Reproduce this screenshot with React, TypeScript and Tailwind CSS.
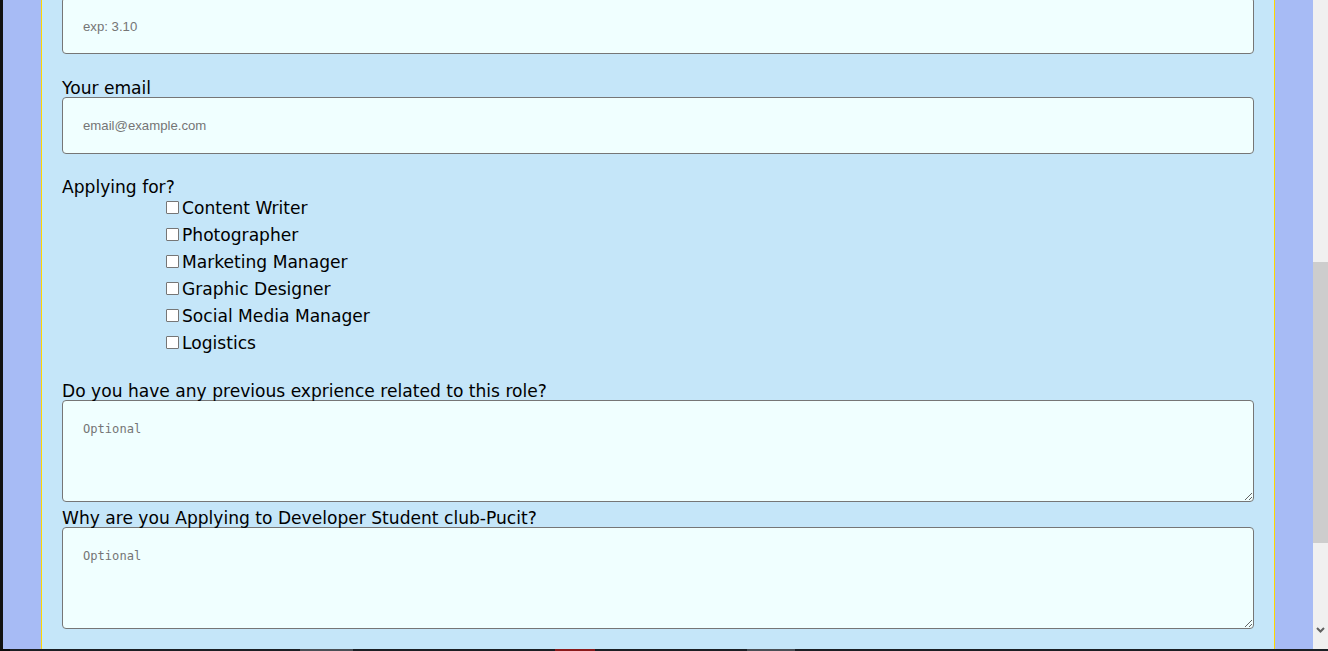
import React from "react";

const roles = [
  "Content Writer",
  "Photographer",
  "Marketing Manager",
  "Graphic Designer",
  "Social Media Manager",
  "Logistics",
];

export default function App() {
  return (
    <div className="w-[1328px] h-[651px] overflow-hidden flex flex-col bg-[#1b1f24]">
      <div className="flex flex-row h-[649px] overflow-hidden">
        <div className="w-[3px] shrink-0 bg-[#111111]" />
        <div className="w-[38px] shrink-0 bg-[#a7bbf5]" />
        <div className="w-[1px] shrink-0 bg-[#ffd700]" />
        <div
          className="flex-1 bg-[#c5e6f9] px-[20px] text-black overflow-hidden"
          style={{ fontFamily: "Verdana, 'DejaVu Sans', sans-serif" }}
        >
          <input
            type="text"
            placeholder="exp: 3.10"
            className="block w-full h-[57px] mt-[-3px] bg-[#f0ffff] border border-[#767676] rounded-[4px] pl-[20px] pt-[1px] text-[13.2px] placeholder:text-[#757575] outline-none"
            style={{ fontFamily: "'Liberation Sans', Arial, sans-serif" }}
          />
          <div className="mt-[23px] h-[20px] leading-[22px] text-[17.1px]">Your email</div>
          <input
            type="email"
            placeholder="email@example.com"
            className="block w-full h-[57px] bg-[#f0ffff] border border-[#767676] rounded-[4px] pl-[20px] text-[13.2px] placeholder:text-[#757575] outline-none"
            style={{ fontFamily: "'Liberation Sans', Arial, sans-serif" }}
          />
          <div className="mt-[22px] h-[18px] leading-[22px] text-[17.1px]">Applying for?</div>
          <div className="pl-[104px]">
            {roles.map((r) => (
              <label key={r} className="flex items-center h-[27px] text-[17.1px]">
                <input
                  type="checkbox"
                  className="appearance-none w-[13px] h-[13px] border border-[#767676] rounded-[1px] bg-white mr-[3px] shrink-0"
                />
                <span className="leading-[20px]">{r}</span>
              </label>
            ))}
          </div>
          <div className="mt-[24px] h-[20px] leading-[22px] text-[17.1px]">
            Do you have any previous exprience related to this role?
          </div>
          <textarea
            placeholder="Optional"
            className="block w-full h-[102px] bg-[#f0ffff] border border-[#767676] rounded-[4px] pl-[20px] pt-[19px] text-[12.1px] placeholder:text-[#757575] outline-none"
            style={{ fontFamily: "'DejaVu Sans Mono', 'Liberation Mono', monospace" }}
          />
          <div className="mt-[5px] h-[20px] leading-[22px] text-[17.1px]">
            Why are you Applying to Developer Student club-Pucit?
          </div>
          <textarea
            placeholder="Optional"
            className="block w-full h-[102px] bg-[#f0ffff] border border-[#767676] rounded-[4px] pl-[20px] pt-[19px] text-[12.1px] placeholder:text-[#757575] outline-none"
            style={{ fontFamily: "'DejaVu Sans Mono', 'Liberation Mono', monospace" }}
          />
        </div>
        <div className="w-[1px] shrink-0 bg-[#ffd700]" />
        <div className="w-[38px] shrink-0 bg-[#a7bbf5]" />
        <div className="w-[15px] shrink-0 bg-[#f0f0f0] flex flex-col">
          <div className="h-[262px]" />
          <div className="h-[281px] bg-[#cdcdcd]" />
          <div className="flex-1" />
          <div className="h-[22px] flex items-start justify-center">
            <svg width="9" height="6" viewBox="0 0 9 6">
              <path d="M1 1 L4.5 4.5 L8 1" stroke="#606060" strokeWidth="2" fill="none" />
            </svg>
          </div>
        </div>
      </div>
      <div className="h-[2px] flex flex-row">
        <div className="w-[10px] bg-[#0b0b0b]" />
        <div className="w-[290px] bg-[#1b1f24]" />
        <div className="w-[53px] bg-[#4a4f55]" />
        <div className="w-[202px] bg-[#1b1f24]" />
        <div className="w-[40px] bg-[#8b1a1a]" />
        <div className="w-[152px] bg-[#1b1f24]" />
        <div className="w-[48px] bg-[#4a4f55]" />
        <div className="flex-1 bg-[#1b1f24]" />
      </div>
    </div>
  );
}
